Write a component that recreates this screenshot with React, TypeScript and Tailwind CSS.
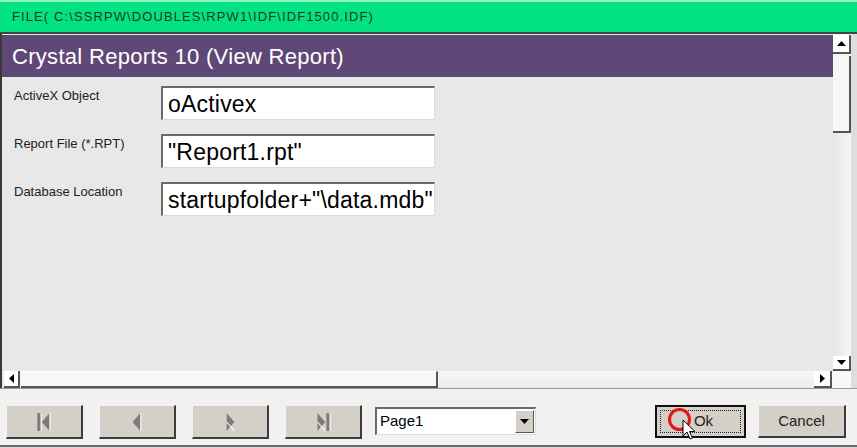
import React from 'react'

const font = { fontFamily: '"Liberation Sans", Arial, sans-serif' }

function NavIcon({ kind }: { kind: 'first' | 'prev' | 'next' | 'last' }) {
  // grey etched triangles, like a disabled win32 button
  const left = kind === 'first' || kind === 'prev'
  const bar = kind === 'first' || kind === 'last'
  return (
    <svg width="20" height="20" viewBox="0 0 18 18">
      {left ? (
        <>
          {bar && <rect x="3" y="1" width="3" height="16" fill="#7c7c7c" />}
          {bar && <rect x="6" y="1" width="1" height="16" fill="#fafafa" />}
          <polygon points={bar ? '14,1 7,9 14,17' : '12,1 5,9 12,17'} fill="#7c7c7c" />
          <line x1={bar ? 14.5 : 12.5} y1="1" x2={bar ? 14.5 : 12.5} y2="17" stroke="#fafafa" />
        </>
      ) : (
        <>
          <polygon points={bar ? '4,1 11,9 4,17' : '6,1 13,9 6,17'} fill="#7c7c7c" />
          <line x1={bar ? 4 : 6} y1="9" x2={bar ? 11 : 13} y2="17" stroke="#fafafa" />
          {bar && <rect x="12" y="1" width="3" height="16" fill="#7c7c7c" />}
          {bar && <rect x="15" y="1" width="1" height="16" fill="#fafafa" />}
        </>
      )}
    </svg>
  )
}

function NavButton({ kind }: { kind: 'first' | 'prev' | 'next' | 'last' }) {
  return (
    <div className="mt-[16px] flex h-[34px] w-[77px] items-center justify-center border-t border-l border-t-[#f2f2f2] border-l-[#f2f2f2] border-r-2 border-b-2 border-r-[#3c3c3c] border-b-[#3c3c3c] bg-[#d4d0c8]">
      <NavIcon kind={kind} />
    </div>
  )
}

function Field({ label, value }: { label: string; value: string }) {
  return (
    <div className="flex items-start">
      <div className="w-[147px] pt-[2px] text-[13px] leading-[15px] text-[#222]">{label}</div>
      <div className="flex h-[34px] w-[274px] items-center overflow-hidden whitespace-nowrap border-t-2 border-l-2 border-t-[#6a6a6a] border-l-[#6a6a6a] border-b border-r border-b-[#dcdcdc] border-r-[#dcdcdc] bg-white pl-[5px] pt-[2px] text-[23px] leading-none tracking-[0.2px] text-black">
        {value}
      </div>
    </div>
  )
}

export default function App() {
  return (
    <div className="relative h-[448px] w-[857px] overflow-hidden bg-[#e9e9e9]" style={font}>
      {/* file path bar */}
      <div className="flex h-[32px] items-center border-t-2 border-t-[#8ef0c2] bg-[#03e283] pl-[12px] text-[13px] tracking-[1.1px] text-[#1b3a22]">
        FILE( C:\SSRPW\DOUBLES\RPW1\IDF\IDF1500.IDF)
      </div>
      <div className="h-[2px] bg-[#444]" />

      {/* main panel */}
      <div className="flex h-[354px]">
        <div className="w-[2px] bg-[#3a3a3a]" />
        <div className="flex flex-1 flex-col">
          <div className="flex flex-1">
            <div className="flex flex-1 flex-col pt-[1px]">
              <div className="flex h-[42px] items-center bg-[#5f4877] pl-[10px] text-[22px] tracking-[0.3px] text-white">
                Crystal Reports 10 (View Report)
              </div>
              <div className="flex flex-1 flex-col gap-[14px] bg-[#e8e8e8] pl-[12px] pt-[9px]">
                <Field label="ActiveX Object" value="oActivex" />
                <Field label="Report File (*.RPT)" value={'"Report1.rpt"'} />
                <Field label="Database Location" value={'startupfolder+"\\data.mdb"'} />
              </div>
            </div>
            {/* vertical scrollbar */}
            <div className="flex w-[18px] flex-col bg-[#f4f4f4] pt-[1px]">
              <div className="flex h-[19px] items-center justify-center border-r-2 border-b-2 border-r-[#555] border-b-[#555] bg-white">
                <svg width="9" height="5" viewBox="0 0 9 5">
                  <polygon points="0,5 4.5,0 9,5" fill="#000" />
                </svg>
              </div>
              <div className="mt-[2px] h-[77px] border-r-2 border-b-2 border-r-[#555] border-b-[#555] bg-[#f7f7f5]" />
              <div className="flex-1 bg-gradient-to-r from-[#e6e6e6] to-[#f6f6f6]" />
              <div className="flex h-[15px] items-center justify-center border-r-2 border-b-2 border-r-[#555] border-b-[#555] bg-white">
                <svg width="9" height="5" viewBox="0 0 9 5">
                  <polygon points="0,0 4.5,5 9,0" fill="#000" />
                </svg>
              </div>
            </div>
          </div>
          {/* horizontal scrollbar */}
          <div className="flex h-[17px]">
            <div className="ml-[2px] flex flex-1 bg-gradient-to-b from-[#f7f7f7] to-[#ececec]">
              <div className="flex w-[16px] items-center justify-center border-r-2 border-b-2 border-r-[#555] border-b-[#555] bg-white">
                <svg width="5" height="9" viewBox="0 0 5 9">
                  <polygon points="5,0 0,4.5 5,9" fill="#000" />
                </svg>
              </div>
              <div className="ml-[1px] w-[417px] border-t border-t-white border-r-2 border-b-2 border-r-[#555] border-b-[#555] bg-[#f7f7f5]" />
              <div className="flex-1" />
              <div className="flex w-[18px] items-center justify-center border-r-2 border-b-2 border-r-[#555] border-b-[#555] bg-white">
                <svg width="5" height="9" viewBox="0 0 5 9">
                  <polygon points="0,0 5,4.5 0,9" fill="#000" />
                </svg>
              </div>
            </div>
            <div className="w-[19px] bg-[#f8f8f8]" />
          </div>
        </div>
        <div className="w-[6px] bg-[#dedede]" />
      </div>

      {/* button bar */}
      <div className="flex h-[57px] items-start border-t border-t-[#9a9a9a] bg-[#f1f1f1] pl-[6px]">
        <div className="flex gap-[16px]">
          <NavButton kind="first" />
          <NavButton kind="prev" />
          <NavButton kind="next" />
          <NavButton kind="last" />
        </div>
        <div className="ml-[13px] mt-[18px] flex h-[28px] w-[161px] border-t-2 border-l-2 border-t-[#6a6a6a] border-l-[#6a6a6a] border-b border-r border-b-[#dcdcdc] border-r-[#dcdcdc] bg-white">
          <div className="flex flex-1 items-center pl-[3px] text-[15px] text-black">Page1</div>
          <div className="my-[1px] mr-[1px] flex w-[19px] items-center justify-center border-t border-l border-t-white border-l-white border-r border-b border-r-[#555] border-b-[#555] bg-[#d4d0c8]">
            <svg width="9" height="5" viewBox="0 0 9 5">
              <polygon points="0,0 4.5,5 9,0" fill="#000" />
            </svg>
          </div>
        </div>
        <div className="ml-auto mt-[16px] flex gap-[12px] pr-[11px]">
          <div className="h-[33px] w-[91px] border-2 border-[#111] bg-[#d4d0c8] p-[3px]">
            <div className="flex h-full items-center justify-center border border-dotted border-[#222] pl-[6px] text-[15px] text-[#222]">
              Ok
            </div>
          </div>
          <div className="flex h-[33px] w-[88px] items-center justify-center border-t border-l border-t-[#f2f2f2] border-l-[#f2f2f2] border-r-2 border-b-2 border-r-[#3c3c3c] border-b-[#3c3c3c] bg-[#d4d0c8] text-[15px] text-[#222]">
            Cancel
          </div>
        </div>
      </div>
      <div className="h-[2px] bg-[#6a6a6a]" />
      <div className="h-[1px] bg-[#dcdcdc]" />

      {/* click highlight + mouse pointer */}
      <div className="absolute left-[668px] top-[408px] h-[23px] w-[23px] rounded-full border-[3px] border-[#e01818]" />
      <svg className="absolute left-[682px] top-[419px]" width="14" height="22" viewBox="0 0 14 22">
        <path d="M1 1 L1 17 L5 13 L8 20 L10.5 19 L7.5 12.5 L13 12.5 Z" fill="#fff" stroke="#000" strokeWidth="1" strokeLinejoin="round" />
      </svg>
    </div>
  )
}
